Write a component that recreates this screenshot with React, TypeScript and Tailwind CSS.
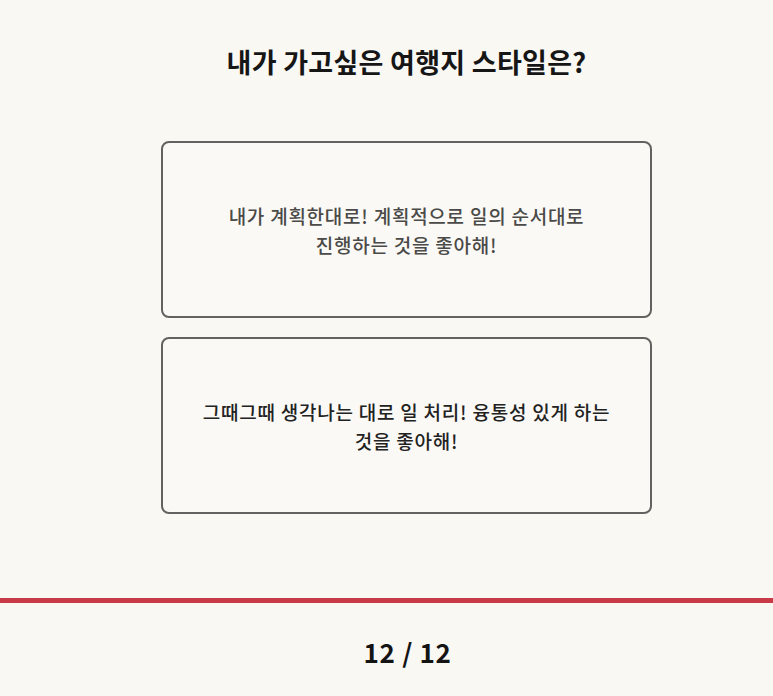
const choices = [
  {
    id: "J",
    text: "내가 계획한대로! 계획적으로 일의 순서대로 진행하는 것을 좋아해!",
    tone: "text-[#4a4a48]",
  },
  {
    id: "P",
    text: "그때그때 생각나는 대로 일 처리! 융통성 있게 하는 것을 좋아해!",
    tone: "text-[#222222]",
  },
];

function App() {
  return (
    <main className="flex min-h-[696px] flex-col bg-[#faf8f3] font-['Noto_Sans_CJK_KR','Noto_Sans',sans-serif]">

      <section className="ml-[40px] flex flex-col items-center">

        <h1 className="mt-[44px] text-[27px] leading-[36px] font-bold tracking-[0.01em] text-[#161616]">
          내가 가고싶은 여행지 스타일은?
        </h1>

        <div className="mt-[61px] flex flex-col gap-[19px]">
          {choices.map(choice => (
            <button
              key={choice.id}
              type="button"
              className="flex h-[177px] w-[491px] items-center justify-center rounded-[8px] border-2 border-[#626260] bg-[#fbf9f5]"
            >
              <p className={`max-w-[426px] break-keep text-[19px] leading-[29px] font-medium tracking-[0.04em] ${choice.tone}`}>
                {choice.text}
              </p>
            </button>
          ))}
        </div>

      </section>

      <div className="mt-[84px] h-[5px] w-full bg-[#c93a47]" />

      <footer className="ml-[42px] flex flex-1 items-center justify-center pt-[4px]">
        <p className="text-[26px] font-bold tracking-wide text-[#141414]">
          12 / 12
        </p>
      </footer>

    </main>
  );
}

export default App;
